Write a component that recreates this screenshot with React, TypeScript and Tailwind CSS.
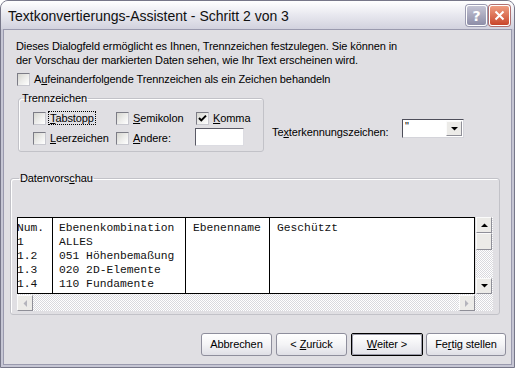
import React from "react";

function U({ children }: { children: React.ReactNode }) {
  return <span className="underline underline-offset-[1px] decoration-[1px]">{children}</span>;
}

function Check({ checked }: { checked?: boolean }) {
  return (
    <span className="w-[13px] h-[13px] shrink-0 border border-t-[#7c7c86] border-l-[#7c7c86] border-r-[#c8c8cf] border-b-[#c8c8cf] bg-linear-to-br from-[#d6d6d0] via-[#ececea] to-white flex items-center justify-center">
      {checked && (
        <svg width="9" height="9" viewBox="0 0 9 9">
          <path d="M1 4 L3.3 6.4 L8 1.6" stroke="#000" strokeWidth="2" fill="none" />
        </svg>
      )}
    </span>
  );
}

function Arrow({ dir, color = "#000" }: { dir: "up" | "down" | "left" | "right"; color?: string }) {
  const pts: Record<string, string> = {
    up: "0,4 3.5,0.5 7,4",
    down: "0,0 3.5,3.5 7,0",
    left: "4,0 0.5,3.5 4,7",
    right: "0,0 3.5,3.5 0,7",
  };
  const v = dir === "up" || dir === "down";
  return (
    <svg width={v ? 7 : 4} height={v ? 4 : 7} viewBox={v ? "0 0 7 4" : "0 0 4 7"}>
      <polygon points={pts[dir]} fill={color} />
    </svg>
  );
}

function SBtn({ dir, disabled }: { dir: "up" | "down" | "left" | "right"; disabled?: boolean }) {
  return (
    <div className="w-[16px] h-[16px] shrink-0 bg-[#ecebe8] border border-t-[#fbfbfb] border-l-[#fbfbfb] border-r-[#8f8f98] border-b-[#8f8f98] flex items-center justify-center">
      <Arrow dir={dir} color={disabled ? "#b4b4bc" : "#000"} />
    </div>
  );
}

function Btn({ children, w, def }: { children: React.ReactNode; w: string; def?: boolean }) {
  if (def) {
    return (
      <div className={`h-[23px] ${w} border border-black rounded-[2px] p-0`}>
        <div className="w-full h-full border border-[#9a9aa8] rounded-[2px] bg-linear-to-b from-white to-[#e4e4ea] flex items-center justify-center">
          <span className="whitespace-pre">{children}</span>
        </div>
      </div>
    );
  }
  return (
    <div className={`h-[23px] ${w} border border-[#8e8e9c] rounded-[3px] bg-linear-to-b from-white via-[#f4f4f6] to-[#dfdfe6] flex items-center justify-center`}>
      <span className="whitespace-pre">{children}</span>
    </div>
  );
}

const checker =
  "bg-[image:repeating-conic-gradient(#d9d9de_0_25%,#ffffff_0_50%)] bg-[length:2px_2px]";

export default function App() {
  const col1 = ["Num.", "1", "1.2", "1.3", "1.4"];
  const col2 = ["Ebenenkombination", "ALLES", "051 Höhenbemaßung", "020 2D-Elemente", "110 Fundamente"];
  return (
    <div className="w-[515px] h-[368px] overflow-hidden bg-white">
      <div className="w-[515px] h-[368px] flex flex-col rounded-t-[8px] border border-[#777789] bg-[#c6c6d4] font-['Liberation_Sans',Arial,sans-serif] text-[11px] tracking-[-0.1px] text-black">
        {/* Title bar */}
        <div className="h-[28px] shrink-0 rounded-t-[7px] bg-linear-to-b from-white via-[#e8e8ef] to-[#d2d2de] flex items-start pl-[7px] pr-[4px] pt-[4px]">
          <span className="flex-1 text-[14px] tracking-normal leading-[22px] text-[#101010]">
            Textkonvertierungs-Assistent - Schritt 2 von 3
          </span>
          <div className="w-[21px] h-[21px] rounded-[3px] border border-white bg-linear-to-b from-[#c4c4d4] to-[#8e8ea8] flex items-center justify-center shadow-[0_0_0_1px_#9a9ab0]">
            <span className="text-white text-[14px] font-bold leading-none font-['DejaVu_Sans',sans-serif]">?</span>
          </div>
          <div className="ml-[2px] w-[21px] h-[21px] rounded-[3px] border border-white bg-linear-to-b from-[#ee9c80] to-[#c8442a] flex items-center justify-center shadow-[0_0_0_1px_#b07070]">
            <svg width="11" height="11" viewBox="0 0 11 11">
              <path d="M1.5 1.5 L9.5 9.5 M9.5 1.5 L1.5 9.5" stroke="white" strokeWidth="2" />
            </svg>
          </div>
        </div>

        {/* Client area */}
        <div className="flex-1 mx-[2px] mb-[2px] border border-[#9a9aae] bg-[#e0dfe3] flex flex-col">
          <p className="pt-[9px] pl-[12px] leading-[14px]">
            Dieses Dialogfeld ermöglicht es Ihnen, Trennzeichen festzulegen. Sie können in
            <br />
            der Vorschau der markierten Daten sehen, wie Ihr Text erscheinen wird.
          </p>

          <div className="mt-[5px] ml-[13px] h-[14px] flex items-center gap-[4px]">
            <Check />
            <span>
              A<U>u</U>feinanderfolgende Trennzeichen als ein Zeichen behandeln
            </span>
          </div>

          <div className="mt-[5px] flex items-start">
            <fieldset className="ml-[14px] w-[246px] border border-[#c2c2c8] rounded-[3px] shadow-[inset_1px_1px_0_#fff]">
              <legend className="ml-[2px] px-[1px] leading-[14px]">Trennzeichen</legend>
              <div className="grid grid-cols-[83px_80px_auto] grid-rows-[14px_18px] gap-y-[3px] pl-[14px] pt-[6px] pb-[5px]">
                <div className="flex items-center gap-[2px]">
                  <Check />
                  <span className="border border-dotted border-black px-[1px] leading-[12px]">
                    <U>T</U>abstopp
                  </span>
                </div>
                <div className="flex items-center gap-[4px]">
                  <Check />
                  <span>
                    <U>S</U>emikolon
                  </span>
                </div>
                <div className="flex items-center gap-[4px]">
                  <Check checked />
                  <span>
                    <U>K</U>omma
                  </span>
                </div>
                <div className="flex items-center gap-[4px] pt-[3px]">
                  <Check />
                  <span>
                    <U>L</U>eerzeichen
                  </span>
                </div>
                <div className="flex items-center gap-[4px] pt-[3px]">
                  <Check />
                  <span>
                    <U>A</U>ndere:
                  </span>
                </div>
                <div className="-ml-[1px] w-[49px] h-[18px] bg-white border border-t-[#5a5a66] border-l-[#5a5a66] border-r-[#dcdce2] border-b-[#dcdce2]" />
              </div>
            </fieldset>

            <div className="ml-[8px] flex items-start">
              <span className="w-[130px] mt-[34px] leading-[14px]">
                Te<U>x</U>terkennungszeichen:
              </span>
              <div className="mt-[28px] w-[62px] h-[19px] bg-white border border-t-[#4e4e5a] border-l-[#4e4e5a] border-r-[#d4d4da] border-b-[#d4d4da] flex items-start justify-between pl-[2px] pr-[1px] pt-[1px]">
                <span className="leading-[10px] text-[11px]">"</span>
                <div className="w-[16px] h-[15px] bg-[#ecebe8] border border-t-[#fbfbfb] border-l-[#fbfbfb] border-r-[#8f8f98] border-b-[#8f8f98] flex items-center justify-center">
                  <Arrow dir="down" />
                </div>
              </div>
            </div>
          </div>

          {/* Datenvorschau */}
          <fieldset className="mt-[19px] ml-[6px] w-[490px] border border-[#c2c2c8] rounded-[3px] shadow-[inset_1px_1px_0_#fff] pl-[6px] pb-[3px]">
            <legend className="ml-[2px] px-[1px] leading-[14px]">
              Datenvors<U>c</U>hau
            </legend>
            <div className="mt-[32px] w-[476px] flex flex-col">
              <div className="flex h-[77px]">
                <div className="w-[458px] h-[77px] border border-black bg-white flex font-['Liberation_Mono',monospace] text-[11.3px] tracking-normal leading-[14px] text-[#111]">
                  <div className="w-[35px] border-r border-black overflow-hidden pt-[3px]">
                    {col1.map((t) => (
                      <div key={t} className="-ml-[1px] whitespace-pre">{t}</div>
                    ))}
                  </div>
                  <div className="w-[133px] border-r border-black pt-[3px] pl-[6px]">
                    {col2.map((t) => (
                      <div key={t} className="whitespace-pre">{t}</div>
                    ))}
                  </div>
                  <div className="w-[84px] border-r border-black pt-[3px] pl-[7px]">
                    <div>Ebenenname</div>
                  </div>
                  <div className="flex-1 pt-[3px] pl-[7px]">
                    <div>Geschützt</div>
                  </div>
                </div>
                <div className={`ml-[1px] w-[17px] flex flex-col ${checker}`}>
                  <SBtn dir="up" />
                  <div className="w-[16px] h-[17px] bg-[#ecebe8] border border-t-[#fbfbfb] border-l-[#fbfbfb] border-r-[#8f8f98] border-b-[#8f8f98]" />
                  <div className="flex-1" />
                  <SBtn dir="down" />
                </div>
              </div>
              <div className={`h-[17px] flex items-start pt-[1px] ${checker}`}>
                <SBtn dir="left" disabled />
                <div className="flex-1" />
                <SBtn dir="right" disabled />
                <div className="w-[18px]" />
              </div>
            </div>
          </fieldset>

          {/* Buttons */}
          <div className="mt-[18px] flex justify-end pr-[5px]">
            <Btn w="w-[71px]">Abbrechen</Btn>
            <div className="w-[4px]" />
            <Btn w="w-[71px]">
              &lt; <U>Z</U>urück
            </Btn>
            <div className="w-[4px]" />
            <Btn w="w-[72px]" def>
              <U>W</U>eiter &gt;
            </Btn>
            <div className="w-[3px]" />
            <Btn w="w-[80px]">
              Fe<U>r</U>tig stellen
            </Btn>
          </div>
        </div>
      </div>
    </div>
  );
}
